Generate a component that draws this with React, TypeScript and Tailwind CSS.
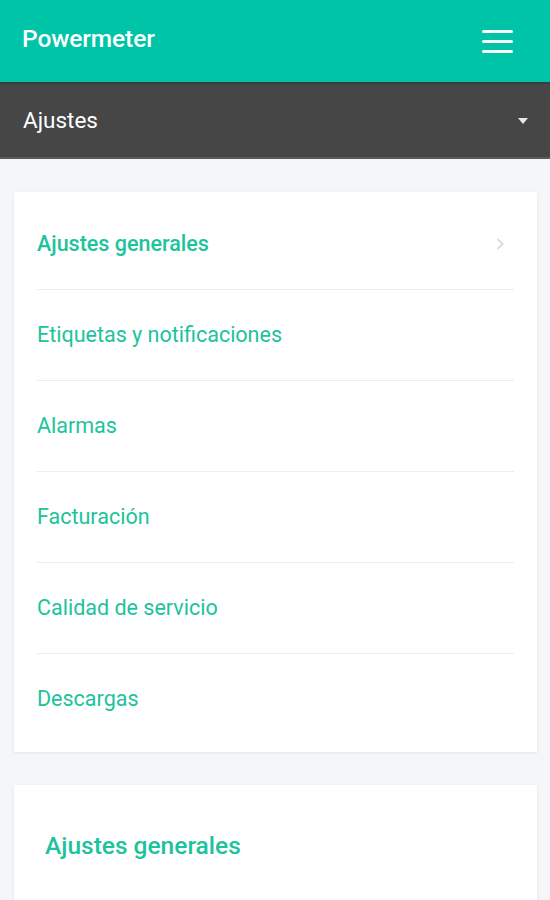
import React from "react";

const items = [
  "Ajustes generales",
  "Etiquetas y notificaciones",
  "Alarmas",
  "Facturación",
  "Calidad de servicio",
  "Descargas",
];

const App = () => {
  return (
    <div className="min-h-[900px] bg-[#f5f6f8] font-['Roboto',sans-serif]">
      <header className="flex h-[82px] items-center justify-between bg-[#00c4a7] pl-[22px] pr-[37px]">
        <span className="mb-[3px] text-[24.5px] font-medium tracking-[-0.1px] text-white">
          Powermeter
        </span>
        <button className="flex w-[31px] flex-col gap-[7px]">
          <span className="h-[3px] rounded-full bg-white" />
          <span className="h-[3px] rounded-full bg-white" />
          <span className="h-[3px] rounded-full bg-white" />
        </button>
      </header>
      <div className="flex h-[77px] items-center justify-between border-t-2 border-b-2 border-t-[#3b3b3b] border-b-[#5a5a5a] bg-[#464646] pl-[23px] pr-[22px]">
        <span className="text-[22.5px] text-white">Ajustes</span>
        <svg width="10" height="6" viewBox="0 0 10 6">
          <path d="M0 0 L10 0 L5 6 Z" fill="#e8e8e8" />
        </svg>
      </div>

      <div className="flex flex-col gap-[33px] pl-[14px] pr-[13px] pt-[33px]">
        <div className="bg-white px-[23px] py-[7px] shadow-[0_1px_3px_rgba(0,0,0,0.08)]">
          {items.map((label, i) => (
            <div
              key={label}
              className={`flex h-[91px] items-center justify-between ${
                i < items.length - 1 ? "border-b border-[#ececec]" : ""
              }`}
            >
              <span
                className={`text-[21.5px] text-[#1cc39b] ${
                  i === 0 ? "font-medium" : "font-normal"
                }`}
              >
                {label}
              </span>
              {i === 0 && (
                <svg width="8" height="12" viewBox="0 0 8 12" className="mr-[10px]">
                  <path
                    d="M1.5 1 L6.5 6 L1.5 11"
                    fill="none"
                    stroke="#dcdcdc"
                    strokeWidth="2"
                  />
                </svg>
              )}
            </div>
          ))}
        </div>

        <div className="h-[150px] bg-white px-[31px] pt-[43px] shadow-[0_1px_3px_rgba(0,0,0,0.08)]">
          <h2 className="text-[24.5px] font-medium text-[#1cc39b]">
            Ajustes generales
          </h2>
        </div>
      </div>
    </div>
  );
};

export default App;
